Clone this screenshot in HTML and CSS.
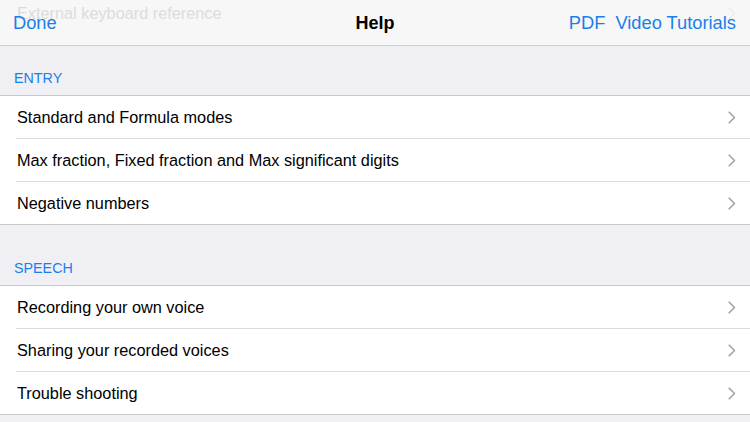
FILE: index.html
```html
<!DOCTYPE html>
<html>
<head>
<meta charset="utf-8">
<link rel="stylesheet" href="styles.css">
</head>
<body>
<div class="screen">
  <header class="navbar">
    <div class="ghost-row">
      <span>External keyboard reference</span>
      <svg class="chev" width="8" height="13" viewBox="0 0 8 13"><path d="M1.2 1.2 L6.5 6.5 L1.2 11.8" fill="none" stroke="currentColor" stroke-width="1.6" stroke-linecap="round" stroke-linejoin="round"/></svg>
    </div>
    <a class="nav-btn">Done</a>
    <h1 class="nav-title">Help</h1>
    <div class="nav-right">
      <a class="nav-btn">PDF</a>
      <a class="nav-btn">Video Tutorials</a>
    </div>
  </header>

  <section class="group">
    <div class="group-header first">ENTRY</div>
    <ul class="rows">
      <li class="row"><span>Standard and Formula modes</span><svg class="chev" width="8" height="13" viewBox="0 0 8 13"><path d="M1.2 1.2 L6.5 6.5 L1.2 11.8" fill="none" stroke="currentColor" stroke-width="1.6" stroke-linecap="round" stroke-linejoin="round"/></svg></li>
      <li class="row"><span>Max fraction, Fixed fraction and Max significant digits</span><svg class="chev" width="8" height="13" viewBox="0 0 8 13"><path d="M1.2 1.2 L6.5 6.5 L1.2 11.8" fill="none" stroke="currentColor" stroke-width="1.6" stroke-linecap="round" stroke-linejoin="round"/></svg></li>
      <li class="row"><span>Negative numbers</span><svg class="chev" width="8" height="13" viewBox="0 0 8 13"><path d="M1.2 1.2 L6.5 6.5 L1.2 11.8" fill="none" stroke="currentColor" stroke-width="1.6" stroke-linecap="round" stroke-linejoin="round"/></svg></li>
    </ul>
  </section>

  <section class="group">
    <div class="group-header">SPEECH</div>
    <ul class="rows">
      <li class="row"><span>Recording your own voice</span><svg class="chev" width="8" height="13" viewBox="0 0 8 13"><path d="M1.2 1.2 L6.5 6.5 L1.2 11.8" fill="none" stroke="currentColor" stroke-width="1.6" stroke-linecap="round" stroke-linejoin="round"/></svg></li>
      <li class="row"><span>Sharing your recorded voices</span><svg class="chev" width="8" height="13" viewBox="0 0 8 13"><path d="M1.2 1.2 L6.5 6.5 L1.2 11.8" fill="none" stroke="currentColor" stroke-width="1.6" stroke-linecap="round" stroke-linejoin="round"/></svg></li>
      <li class="row"><span>Trouble shooting</span><svg class="chev" width="8" height="13" viewBox="0 0 8 13"><path d="M1.2 1.2 L6.5 6.5 L1.2 11.8" fill="none" stroke="currentColor" stroke-width="1.6" stroke-linecap="round" stroke-linejoin="round"/></svg></li>
    </ul>
  </section>
</div>
</body>
</html>
```

FILE: styles.css
```css
* { box-sizing: border-box; }
html, body {
  margin: 0;
  padding: 0;
  background: #efeff4;
  font-family: "Liberation Sans", Arial, sans-serif;
  color: #000;
}
.screen {
  width: 750px;
  height: 422px;
  overflow: hidden;
  background: #efeff4;
}
.navbar {
  position: relative;
  height: 46px;
  background: #f7f7f7;
  border-bottom: 1px solid #cfcfd2;
  display: flex;
  align-items: center;
  padding: 0 14px 0 13px;
  overflow: hidden;
}
.ghost-row {
  position: absolute;
  left: 0;
  right: 0;
  top: -8px;
  height: 42px;
  display: flex;
  align-items: center;
  justify-content: space-between;
  padding: 0 14px 0 17px;
  font-size: 16.3px;
  color: #dcdcdc;
}
.ghost-row .chev { color: #ececec; }
.nav-btn {
  position: relative;
  font-size: 18.3px;
  color: #1a7fec;
  line-height: 1;
  padding-top: 1px;
}
.nav-title {
  position: absolute;
  left: 0;
  right: 0;
  top: 0;
  height: 45px;
  margin: 0;
  display: flex;
  align-items: center;
  justify-content: center;
  font-size: 18px;
  font-weight: bold;
  padding-top: 1px;
  pointer-events: none;
}
.nav-right {
  position: relative;
  margin-left: auto;
  display: flex;
  gap: 10px;
}
.group-header {
  height: 61px;
  display: flex;
  align-items: flex-end;
  padding: 0 0 9px 14px;
  font-size: 14.3px;
  color: #1a7fec;
  border-bottom: 1px solid #c8c7cc;
}
.group-header.first {
  height: 50px;
}
.rows {
  list-style: none;
  margin: 0;
  padding: 0 0 0 16px;
  background: #fff;
  border-bottom: 1px solid #c8c7cc;
}
.row {
  height: 43px;
  display: flex;
  align-items: center;
  justify-content: space-between;
  padding: 1px 14px 0 1px;
  font-size: 16.3px;
  border-bottom: 1px solid #dcdce0;
}
.row .chev { margin-top: -1px; }
.row:last-child {
  border-bottom: none;
  height: 42px;
}
.chev {
  color: #a2a2a8;
  flex: none;
}
```
